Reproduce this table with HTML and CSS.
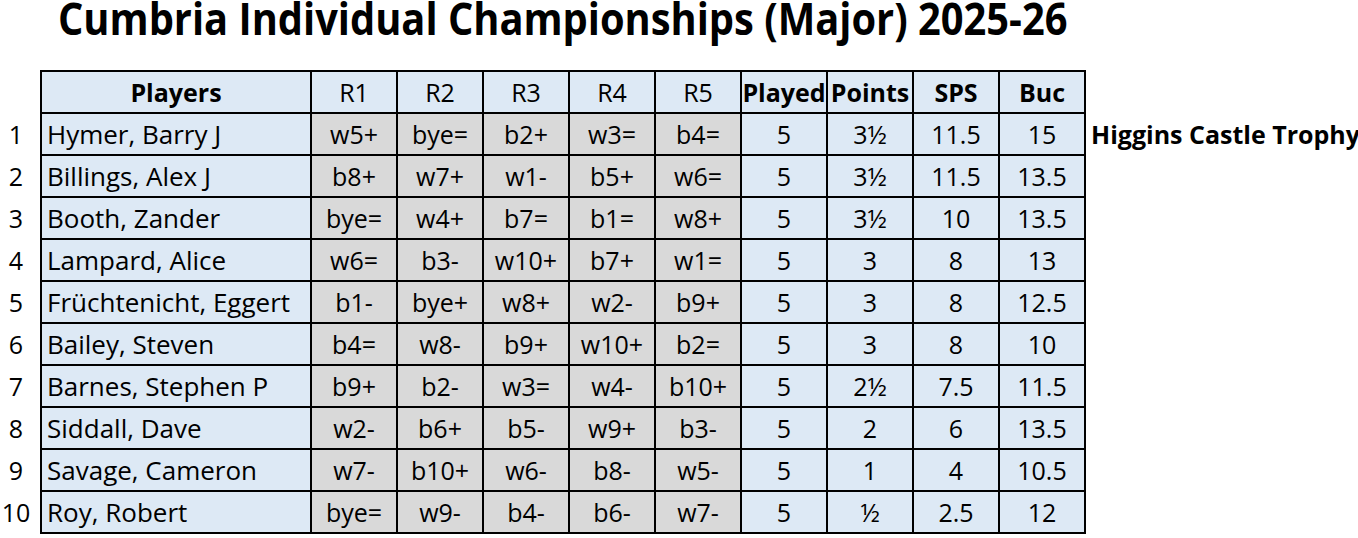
FILE: index.html
```html
<!DOCTYPE html>
<html lang="en">
<head>
<meta charset="utf-8">
<title>Cumbria Individual Championships (Major) 2025-26</title>
<link rel="stylesheet" href="styles.css">
</head>
<body>
<div class="page">
  <h1 class="title"><span class="title-text">Cumbria Individual Championships (Major) 2025-26</span></h1>
  <table class="standings">
    <colgroup>
      <col class="c-num">
      <col class="c-name">
      <col class="c-res"><col class="c-res"><col class="c-res"><col class="c-res"><col class="c-res">
      <col class="c-stat"><col class="c-stat"><col class="c-stat"><col class="c-last">
      <col class="c-note">
    </colgroup>
    <thead>
      <tr>
        <th class="num"></th>
        <th class="hd bold">Players</th>
        <th class="hd">R1</th><th class="hd">R2</th><th class="hd">R3</th><th class="hd">R4</th><th class="hd">R5</th>
        <th class="hd bold">Played</th><th class="hd bold">Points</th><th class="hd bold">SPS</th><th class="hd bold last">Buc</th>
        <th class="note"></th>
      </tr>
    </thead>
    <tbody>
      <tr>
        <td class="num">1</td><td class="name">Hymer, Barry J</td>
        <td class="res">w5+</td><td class="res">bye=</td><td class="res">b2+</td><td class="res">w3=</td><td class="res">b4=</td>
        <td class="stat">5</td><td class="stat">3½</td><td class="stat">11.5</td><td class="stat last">15</td>
        <td class="note">Higgins Castle Trophy</td>
      </tr>
      <tr>
        <td class="num">2</td><td class="name">Billings, Alex J</td>
        <td class="res">b8+</td><td class="res">w7+</td><td class="res">w1-</td><td class="res">b5+</td><td class="res">w6=</td>
        <td class="stat">5</td><td class="stat">3½</td><td class="stat">11.5</td><td class="stat last">13.5</td>
        <td class="note"></td>
      </tr>
      <tr>
        <td class="num">3</td><td class="name">Booth, Zander</td>
        <td class="res">bye=</td><td class="res">w4+</td><td class="res">b7=</td><td class="res">b1=</td><td class="res">w8+</td>
        <td class="stat">5</td><td class="stat">3½</td><td class="stat">10</td><td class="stat last">13.5</td>
        <td class="note"></td>
      </tr>
      <tr>
        <td class="num">4</td><td class="name">Lampard, Alice</td>
        <td class="res">w6=</td><td class="res">b3-</td><td class="res">w10+</td><td class="res">b7+</td><td class="res">w1=</td>
        <td class="stat">5</td><td class="stat">3</td><td class="stat">8</td><td class="stat last">13</td>
        <td class="note"></td>
      </tr>
      <tr>
        <td class="num">5</td><td class="name">Früchtenicht, Eggert</td>
        <td class="res">b1-</td><td class="res">bye+</td><td class="res">w8+</td><td class="res">w2-</td><td class="res">b9+</td>
        <td class="stat">5</td><td class="stat">3</td><td class="stat">8</td><td class="stat last">12.5</td>
        <td class="note"></td>
      </tr>
      <tr>
        <td class="num">6</td><td class="name">Bailey, Steven</td>
        <td class="res">b4=</td><td class="res">w8-</td><td class="res">b9+</td><td class="res">w10+</td><td class="res">b2=</td>
        <td class="stat">5</td><td class="stat">3</td><td class="stat">8</td><td class="stat last">10</td>
        <td class="note"></td>
      </tr>
      <tr>
        <td class="num">7</td><td class="name">Barnes, Stephen P</td>
        <td class="res">b9+</td><td class="res">b2-</td><td class="res">w3=</td><td class="res">w4-</td><td class="res">b10+</td>
        <td class="stat">5</td><td class="stat">2½</td><td class="stat">7.5</td><td class="stat last">11.5</td>
        <td class="note"></td>
      </tr>
      <tr>
        <td class="num">8</td><td class="name">Siddall, Dave</td>
        <td class="res">w2-</td><td class="res">b6+</td><td class="res">b5-</td><td class="res">w9+</td><td class="res">b3-</td>
        <td class="stat">5</td><td class="stat">2</td><td class="stat">6</td><td class="stat last">13.5</td>
        <td class="note"></td>
      </tr>
      <tr>
        <td class="num">9</td><td class="name">Savage, Cameron</td>
        <td class="res">w7-</td><td class="res">b10+</td><td class="res">w6-</td><td class="res">b8-</td><td class="res">w5-</td>
        <td class="stat">5</td><td class="stat">1</td><td class="stat">4</td><td class="stat last">10.5</td>
        <td class="note"></td>
      </tr>
      <tr class="final">
        <td class="num">10</td><td class="name">Roy, Robert</td>
        <td class="res">bye=</td><td class="res">w9-</td><td class="res">b4-</td><td class="res">b6-</td><td class="res">w7-</td>
        <td class="stat">5</td><td class="stat">½</td><td class="stat">2.5</td><td class="stat last">12</td>
        <td class="note"></td>
      </tr>
    </tbody>
  </table>
</div>
</body>
</html>
```

FILE: styles.css
```css
html, body {
  margin: 0;
  padding: 0;
  background: #ffffff;
}

body {
  font-family: "Open Sans", "Liberation Sans", sans-serif;
  color: #000000;
}

.page {
  width: 1358px;
}

.title {
  margin: 0;
  width: 1126px;
  height: 70px;
  padding-top: 2px;
  box-sizing: border-box;
  font-size: 44px;
  line-height: 32px;
  font-weight: 700;
  text-align: center;
  white-space: nowrap;
}

.title-text {
  display: inline-block;
  transform: scaleX(0.905);
  transform-origin: center top;
}

.standings {
  border-collapse: separate;
  border-spacing: 0;
  table-layout: fixed;
  width: 1358px;
  font-size: 25px;
}

.c-num { width: 40px; }
.c-name { width: 270px; }
.c-res { width: 86px; }
.c-stat { width: 86px; }
.c-last { width: 88px; }
.c-note { width: 272px; }

.standings th,
.standings td {
  box-sizing: border-box;
  height: 42px;
  padding: 1px 0 0 0;
  line-height: 39px;
  border-top: 2px solid #000;
  border-left: 2px solid #000;
  text-align: center;
  vertical-align: top;
  white-space: nowrap;
  font-weight: 400;
  background: #dde9f5;
}

.standings .bold {
  font-weight: 700;
}

.standings .name {
  text-align: left;
  padding-left: 5px;
  font-size: 26px;
}

.standings .res {
  background: #d9d9d9;
}

.standings .last {
  border-right: 2px solid #000;
}

.standings .num,
.standings .note {
  border: none;
  background: transparent;
  padding-top: 3px;
}

.standings .num {
  text-align: center;
  padding-right: 8px;
}

.standings .note {
  text-align: left;
  padding-left: 5px;
  font-weight: 700;
}

.standings .final td {
  height: 44px;
  border-bottom: 2px solid #000;
}

.standings .final td.num,
.standings .final td.note {
  border: none;
}
```
